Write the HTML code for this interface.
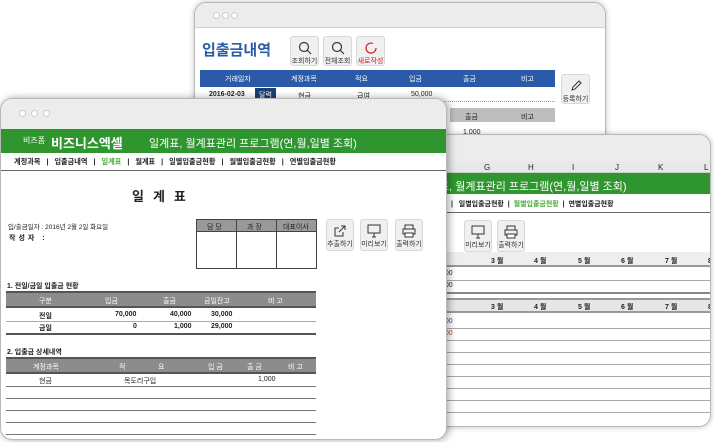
<!DOCTYPE html>
<html><head><meta charset="utf-8"><style>
*{margin:0;padding:0;box-sizing:border-box}
body{width:714px;height:442px;overflow:hidden;background:#fff;position:relative;font-family:"Liberation Sans","Noto Sans CJK KR",sans-serif;color:#222}
.a{position:absolute}
.win{position:absolute;background:#fff;border:1px solid #b8b8b8;border-radius:12px;overflow:hidden;box-shadow:0 0 6px rgba(0,0,0,.25)}
.bar{position:absolute;left:0;right:0;top:0;background:#ececec;border-bottom:1px solid #d0d0d0}
.dot{position:absolute;width:7px;height:7px;border-radius:50%;background:#fff;border:1px solid #ccc}
.btn{position:absolute;background:#f0f0f0;border:1px solid #d8d8d8;border-radius:3px;font-size:7px;text-align:center;color:#333}
.btn svg{display:block;margin:4px auto 1px}
.t{position:absolute;font-size:7px;white-space:nowrap}
.hl{position:absolute;height:1px;background:#aaa}
</style></head><body>

<!-- Window A -->
<div class="win" style="left:194px;top:2px;width:412px;height:150px">
 <div class="bar" style="height:25px"></div>
 <div class="dot" style="left:18px;top:9px"></div><div class="dot" style="left:27px;top:9px"></div><div class="dot" style="left:36px;top:9px"></div>
 <div class="t" style="left:7px;top:36px;font-size:15px;font-weight:bold;color:#2a5ca8">입출금내역</div>
 <div class="btn" style="left:95px;top:33px;width:29px;height:30px"><svg width="14" height="14" viewBox="0 0 14 14"><circle cx="6" cy="6" r="4.5" fill="none" stroke="#333" stroke-width="1.2"/><path d="M9 9l4 4" stroke="#333" stroke-width="1.2"/></svg>조회하기</div>
 <div class="btn" style="left:128px;top:33px;width:29px;height:30px"><svg width="14" height="14" viewBox="0 0 14 14"><circle cx="6" cy="6" r="4.5" fill="none" stroke="#333" stroke-width="1.2"/><path d="M9 9l4 4" stroke="#333" stroke-width="1.2"/></svg>전체조회</div>
 <div class="btn" style="left:161px;top:33px;width:29px;height:30px;color:#c22"><svg width="14" height="14" viewBox="0 0 14 14"><path d="M9 2.5A5 5 0 1 0 12 7" fill="none" stroke="#c22" stroke-width="1.2"/></svg>새로작성</div>
 <div class="a" style="left:5px;top:67px;width:355px;height:17px;background:#2b5aa8"></div>
 <div class="t" style="left:30px;top:71px;color:#fff">거래일자</div><div class="t" style="left:96px;top:71px;color:#fff">계정과목</div><div class="t" style="left:160px;top:71px;color:#fff">적요</div><div class="t" style="left:214px;top:71px;color:#fff">입금</div><div class="t" style="left:268px;top:71px;color:#fff">출금</div><div class="t" style="left:326px;top:71px;color:#fff">비고</div>
 <div class="t" style="left:14px;top:88px;font-weight:bold">2016-02-03</div>
 <div class="t" style="left:60px;top:85px;background:#1d3f73;color:#fff;padding:2px 4px">달력</div>
 <div class="t" style="left:103px;top:88px">현금</div><div class="t" style="left:162px;top:88px">급여</div><div class="t" style="left:216px;top:88px">50,000</div>
 <div class="a" style="left:5px;top:98px;width:355px;border-top:1px dotted #999"></div>
 <div class="a" style="left:255px;top:105px;width:105px;height:14px;background:#bdbdbd"></div>
 <div class="t" style="left:270px;top:109px">출금</div><div class="t" style="left:326px;top:109px">비고</div>
 <div class="t" style="left:268px;top:126px">1,000</div>
 <div class="btn" style="left:366px;top:71px;width:29px;height:30px"><svg width="14" height="14" viewBox="0 0 14 14"><path d="M3 11l1-3 6-6 2 2-6 6z" fill="none" stroke="#333" stroke-width="1"/></svg>등록하기</div>
</div>

<!-- Window C -->
<div class="win" style="left:420px;top:134px;width:291px;height:293px">
 <div class="bar" style="height:26px;border-bottom:none"></div>
 <div class="a" style="left:0;top:26px;right:0;height:12px;background:#e8e8e8;border-bottom:1px solid #ccc"></div>
 <div class="t" style="left:63px;top:28px;font-size:8px">G</div><div class="t" style="left:107px;top:28px;font-size:8px">H</div><div class="t" style="left:151px;top:28px;font-size:8px">I</div><div class="t" style="left:194px;top:28px;font-size:8px">J</div><div class="t" style="left:237px;top:28px;font-size:8px">K</div><div class="t" style="left:283px;top:28px;font-size:8px">L</div>
 <div class="a" style="left:0;top:38px;right:0;height:21px;background:#2f962f"></div>
 <div class="t" style="left:18px;top:43px;font-size:11px;color:#fff">표, 월계표관리 프로그램(연,월,일별 조회)</div>
 <div class="t" style="left:30px;top:64px;font-weight:bold">|&nbsp;&nbsp; 일별입출금현황 &nbsp;|&nbsp; <span style="color:#4caa3c">월별입출금현황</span> &nbsp;|&nbsp; 연별입출금현황</div>
 <div class="a" style="left:0;top:77px;right:0;height:1px;background:#666"></div>
 <div class="btn" style="left:43px;top:85px;width:28px;height:32px"><svg width="14" height="14" viewBox="0 0 14 14"><rect x="1" y="1" width="12" height="8" fill="none" stroke="#333"/><path d="M5 13h4M7 9v4" stroke="#333"/></svg>미리보기</div>
 <div class="btn" style="left:76px;top:85px;width:28px;height:32px"><svg width="14" height="14" viewBox="0 0 14 14"><rect x="3" y="1" width="8" height="4" fill="none" stroke="#333"/><rect x="1" y="5" width="12" height="5" fill="none" stroke="#333"/><rect x="3" y="9" width="8" height="4" fill="#fff" stroke="#333"/></svg>출력하기</div>
 <div class="a" style="left:0;top:117px;right:0;height:15px;background:#eee;border-bottom:2px solid #999"></div>
 <div class="a" style="left:0;top:163px;right:0;height:15px;background:#e6e6e6;border-bottom:2px solid #999;border-top:2px solid #999"></div>
 <div class="t" style="left:70px;top:121px;font-weight:bold">3 월</div><div class="t" style="left:113px;top:121px;font-weight:bold">4 월</div><div class="t" style="left:157px;top:121px;font-weight:bold">5 월</div><div class="t" style="left:200px;top:121px;font-weight:bold">6 월</div><div class="t" style="left:244px;top:121px;font-weight:bold">7 월</div><div class="t" style="left:287px;top:121px;font-weight:bold">8 월</div>
 <div class="t" style="left:70px;top:167px;font-weight:bold">3 월</div><div class="t" style="left:113px;top:167px;font-weight:bold">4 월</div><div class="t" style="left:157px;top:167px;font-weight:bold">5 월</div><div class="t" style="left:200px;top:167px;font-weight:bold">6 월</div><div class="t" style="left:244px;top:167px;font-weight:bold">7 월</div><div class="t" style="left:287px;top:167px;font-weight:bold">8 월</div>
 <div class="t" style="left:20px;top:135px">000</div><div class="t" style="left:20px;top:147px">000</div>
 <div class="t" style="left:20px;top:183px;color:#33c">000</div><div class="t" style="left:20px;top:195px;color:#c33">000</div>
 <div class="hl" style="left:0;right:0;top:145px"></div><div class="a" style="left:0;right:0;top:157px;height:2px;background:#888"></div>
 <div class="hl" style="left:0;right:0;top:193px"></div><div class="hl" style="left:0;right:0;top:205px"></div><div class="hl" style="left:0;right:0;top:217px"></div><div class="hl" style="left:0;right:0;top:229px"></div><div class="hl" style="left:0;right:0;top:241px"></div><div class="hl" style="left:0;right:0;top:253px"></div><div class="hl" style="left:0;right:0;top:265px"></div><div class="hl" style="left:0;right:0;top:277px"></div>
</div>

<!-- Window B -->
<div class="win" style="left:0;top:98px;width:447px;height:342px;box-shadow:2px 0 8px rgba(0,0,0,.35)">
 <div class="bar" style="height:30px;border-bottom:none"></div>
 <div class="dot" style="left:18px;top:11px"></div><div class="dot" style="left:30px;top:11px"></div><div class="dot" style="left:42px;top:11px"></div>
 <div class="a" style="left:0;right:0;top:30px;height:24px;background:#2f962f"></div>
 <div class="t" style="left:22px;top:36px;font-size:8px;color:#fff">비즈폼</div>
 <div class="t" style="left:50px;top:34px;font-size:13px;font-weight:bold;color:#fff">비즈니스엑셀</div>
 <div class="t" style="left:148px;top:36px;font-size:11px;color:#fff">일계표, 월계표관리 프로그램(연,월,일별 조회)</div>
 <div class="t" style="left:13px;top:58px;font-weight:bold;font-size:7.2px">계정과목 &nbsp;&nbsp;|&nbsp;&nbsp; 입출금내역 &nbsp;&nbsp;|&nbsp;&nbsp; <span style="color:#4caa3c">일계표</span> &nbsp;&nbsp;|&nbsp;&nbsp; 월계표 &nbsp;&nbsp;|&nbsp;&nbsp; 일별입출금현황 &nbsp;&nbsp;|&nbsp;&nbsp; 월별입출금현황 &nbsp;&nbsp;|&nbsp;&nbsp; 연별입출금현황</div>
 <div class="a" style="left:0;right:0;top:71px;height:1px;background:#666"></div>
 <div class="t" style="left:131px;top:87px;font-size:13px;font-weight:bold;letter-spacing:9px">일계표</div>
 <div class="t" style="left:7px;top:122px;font-size:6.5px">입/출금일자 : 2016년 2월 2일 화요일</div>
 <div class="t" style="left:8px;top:134px;font-weight:bold;letter-spacing:3px">작성자 :</div>
 <div class="a" style="left:195px;top:120px;width:121px;height:50px;border:1px solid #444"></div>
 <div class="a" style="left:195px;top:120px;width:121px;height:13px;background:#999;border:1px solid #444"></div>
 <div class="a" style="left:235px;top:120px;width:1px;height:50px;background:#444"></div><div class="a" style="left:275px;top:120px;width:1px;height:50px;background:#444"></div>
 <div class="t" style="left:206px;top:123px">담 당</div><div class="t" style="left:246px;top:123px">과 장</div><div class="t" style="left:282px;top:123px">대표이사</div>
 <div class="btn" style="left:325px;top:120px;width:28px;height:32px"><svg width="14" height="14" viewBox="0 0 14 14"><path d="M8 2h4v4M12 2L6 8M10 8v4H2V4h4" fill="none" stroke="#333"/></svg>추출하기</div>
 <div class="btn" style="left:359px;top:120px;width:28px;height:32px"><svg width="14" height="14" viewBox="0 0 14 14"><rect x="1" y="1" width="12" height="8" fill="none" stroke="#333"/><path d="M5 13h4M7 9v4" stroke="#333"/></svg>미리보기</div>
 <div class="btn" style="left:394px;top:120px;width:28px;height:32px"><svg width="14" height="14" viewBox="0 0 14 14"><rect x="3" y="1" width="8" height="4" fill="none" stroke="#333"/><rect x="1" y="5" width="12" height="5" fill="none" stroke="#333"/><rect x="3" y="9" width="8" height="4" fill="#fff" stroke="#333"/></svg>출력하기</div>

 <div class="t" style="left:6px;top:182px;font-weight:bold">1. 전일/금일 입출금 현황</div>
 <div class="a" style="left:5px;top:192px;width:310px;height:17px;background:#8c8c8c;border-top:2px solid #555;border-bottom:2px solid #555"></div>
 <div class="t" style="left:38px;top:197px;color:#fff">구분</div><div class="t" style="left:104px;top:197px;color:#fff">입금</div><div class="t" style="left:162px;top:197px;color:#fff">출금</div><div class="t" style="left:203px;top:197px;color:#fff">금일잔고</div><div class="t" style="left:267px;top:197px;color:#fff">비 고</div>
 <div class="t" style="left:38px;top:212px;font-weight:bold">전일</div><div class="t" style="left:114px;top:212px;font-weight:bold">70,000</div><div class="t" style="left:169px;top:212px;font-weight:bold">40,000</div><div class="t" style="left:210px;top:212px;font-weight:bold">30,000</div>
 <div class="hl" style="left:5px;width:310px;top:222px"></div>
 <div class="t" style="left:38px;top:224px;font-weight:bold">금일</div><div class="t" style="left:132px;top:224px;font-weight:bold">0</div><div class="t" style="left:173px;top:224px;font-weight:bold">1,000</div><div class="t" style="left:210px;top:224px;font-weight:bold">29,000</div>
 <div class="a" style="left:5px;width:310px;top:234px;height:2px;background:#555"></div>

 <div class="t" style="left:6px;top:248px;font-weight:bold">2. 입출금 상세내역</div>
 <div class="a" style="left:5px;top:258px;width:310px;height:17px;background:#8c8c8c;border-top:2px solid #555;border-bottom:2px solid #555"></div>
 <div class="t" style="left:32px;top:263px;color:#fff">계정과목</div><div class="t" style="left:118px;top:263px;color:#fff">적</div><div class="t" style="left:157px;top:263px;color:#fff">요</div><div class="t" style="left:207px;top:263px;color:#fff">입 금</div><div class="t" style="left:246px;top:263px;color:#fff">출 금</div><div class="t" style="left:287px;top:263px;color:#fff">비 고</div>
 <div class="t" style="left:38px;top:277px">현금</div><div class="t" style="left:123px;top:277px">목도리구입</div><div class="t" style="left:257px;top:277px">1,000</div>
 <div class="hl" style="left:5px;width:310px;top:287px;background:#777"></div><div class="hl" style="left:5px;width:310px;top:299px;background:#777"></div><div class="hl" style="left:5px;width:310px;top:311px;background:#777"></div><div class="hl" style="left:5px;width:310px;top:323px;background:#777"></div><div class="hl" style="left:5px;width:310px;top:335px;background:#777"></div>
</div>
</body></html>
